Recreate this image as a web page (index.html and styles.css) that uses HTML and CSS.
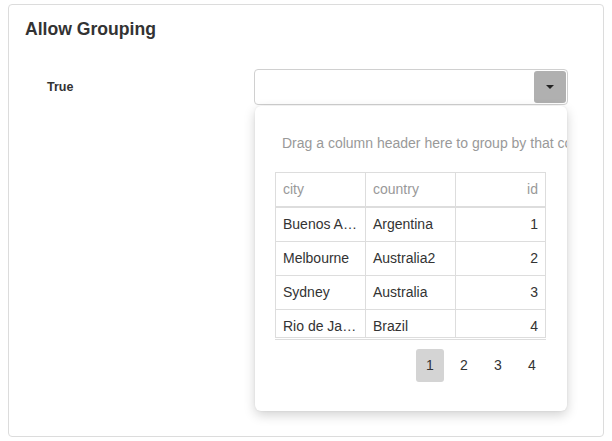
FILE: index.html
```html
<!DOCTYPE html>
<html>
<head>
<meta charset="utf-8">
<link rel="stylesheet" href="styles.css">
</head>
<body>
<div class="card">
  <h2 class="title">Allow Grouping</h2>
  <div class="field">
    <div class="label">True</div>
    <div class="dropdown">
      <div class="dd-input"></div>
      <div class="dd-btn"><span class="caret"></span></div>
      <div class="popup">
        <div class="group-panel">Drag a column header here to group by that column</div>
        <div class="grid">
          <div class="row head">
            <div class="cell">city</div>
            <div class="cell">country</div>
            <div class="cell num">id</div>
          </div>
          <div class="grid-body">
            <div class="row">
              <div class="cell">Buenos Aires</div>
              <div class="cell">Argentina</div>
              <div class="cell num">1</div>
            </div>
            <div class="row">
              <div class="cell">Melbourne</div>
              <div class="cell">Australia2</div>
              <div class="cell num">2</div>
            </div>
            <div class="row">
              <div class="cell">Sydney</div>
              <div class="cell">Australia</div>
              <div class="cell num">3</div>
            </div>
            <div class="row">
              <div class="cell">Rio de Janeiro</div>
              <div class="cell">Brazil</div>
              <div class="cell num">4</div>
            </div>
          </div>
        </div>
        <div class="grid-foot"></div>
        <div class="pager">
          <span class="page active">1</span>
          <span class="page">2</span>
          <span class="page">3</span>
          <span class="page">4</span>
        </div>
      </div>
    </div>
  </div>
</div>
</body>
</html>
```

FILE: styles.css
```css
html, body {
  margin: 0;
  padding: 0;
  background: #fff;
  overflow: hidden;
}
body {
  padding: 4px 8px 0;
  font-family: "Liberation Sans", Arial, sans-serif;
  color: #333;
}
.card {
  box-sizing: border-box;
  height: 433px;
  border: 1px solid #dcdcdc;
  border-radius: 4px;
  padding: 14px 16px;
}
.title {
  margin: 0 0 30px;
  font-size: 17.6px;
  line-height: 20px;
  font-weight: bold;
  color: #333;
}
.field {
  display: grid;
  grid-template-columns: 207px 314px;
  align-items: center;
  padding-left: 22px;
}
.label {
  font-size: 12.5px;
  line-height: 16px;
  font-weight: bold;
  color: #333;
}
.dropdown {
  position: relative;
  box-sizing: border-box;
  height: 36px;
  border: 1px solid #d0d0d0;
  border-radius: 4px;
  display: flex;
  justify-content: flex-end;
  padding: 1px;
}
.dd-input {
  flex: 1;
}
.dd-btn {
  width: 32px;
  height: 32px;
  background: #b0b0b0;
  border-radius: 3px;
  display: flex;
  align-items: center;
  justify-content: center;
}
.caret {
  width: 0;
  height: 0;
  border-left: 4px solid transparent;
  border-right: 4px solid transparent;
  border-top: 4px solid #222;
}
.popup {
  position: absolute;
  top: 36px;
  left: 0;
  width: 312px;
  box-sizing: border-box;
  padding: 20px 21px 20px 20px;
  background: #fff;
  border-radius: 6px;
  box-shadow: 0 4px 12px rgba(0, 0, 0, 0.18), 0 0 2px rgba(0, 0, 0, 0.08);
  overflow: hidden;
}
.group-panel {
  padding: 7px 7px 19px;
  font-size: 14px;
  line-height: 20px;
  color: #999;
  white-space: nowrap;
}
.grid {
  width: 271px;
  box-sizing: border-box;
  border: 1px solid #ddd;
}
.row {
  display: grid;
  grid-template-columns: 90px 90px 89px;
  height: 34px;
  border-bottom: 1px solid #ddd;
  box-sizing: border-box;
}
.row.head {
  height: 35px;
  border-bottom: 2px solid #ddd;
}
.row.head .cell {
  color: #999;
}
.cell {
  box-sizing: border-box;
  padding: 0 7px;
  font-size: 14px;
  line-height: 33px;
  color: #333;
  white-space: nowrap;
  overflow: hidden;
  text-overflow: ellipsis;
  border-right: 1px solid #ddd;
}
.cell.num {
  text-align: right;
  border-right: none;
}
.grid-body {
  height: 129px;
  overflow: hidden;
}
.grid-foot {
  width: 271px;
  margin-top: 1px;
  border-top: 1px solid #ddd;
}
.pager {
  display: flex;
  justify-content: flex-end;
  gap: 6px;
  width: 271px;
  margin: 9px 0 9px;
}
.page {
  width: 28px;
  height: 33px;
  line-height: 33px;
  text-align: center;
  font-size: 14px;
  color: #333;
  border-radius: 3px;
}
.page.active {
  background: #d4d4d4;
}
```
